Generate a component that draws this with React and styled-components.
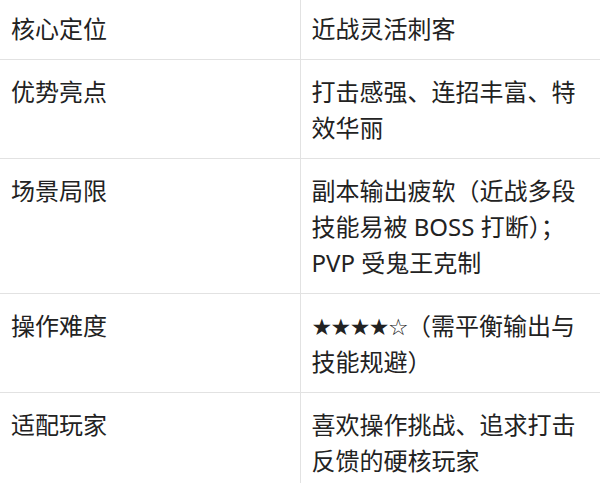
import React from "react";
import styled, { createGlobalStyle } from "styled-components";

const GlobalStyle = createGlobalStyle`
  body {
    margin: 0;
    background: #ffffff;
    font-family: "Noto Sans", "Noto Sans CJK SC", sans-serif;
    color: #222222;
  }
`;

const TableWrap = styled.div`
  width: 600px;
  margin-top: -3px;
  overflow: hidden;
`;

const Table = styled.table`
  width: 600px;
  border-collapse: collapse;
  table-layout: fixed;
  font-size: 24px;
  line-height: 36px;
`;

const Row = styled.tr`
  border-bottom: 1px solid #e2e2e2;
`;

const Cell = styled.td`
  width: 50%;
  padding: 14px 11px 12px;
  vertical-align: top;
  text-align: left;
  border-right: ${(p) => (p.$first ? "1px solid #e2e2e2" : "none")};
`;

const Stars = styled.span`
  font-family: "DejaVu Sans", sans-serif;
  font-size: 23px;
  line-height: 24px;
  letter-spacing: -1.5px;
`;

const rows = [
  { label: "核心定位", value: "近战灵活刺客" },
  { label: "优势亮点", value: "打击感强、连招丰富、特效华丽" },
  {
    label: "场景局限",
    value: "副本输出疲软（近战多段技能易被 BOSS 打断）；PVP 受鬼王克制",
  },
  {
    label: "操作难度",
    value: (
      <>
        <Stars>★★★★☆</Stars>（需平衡输出与技能规避）
      </>
    ),
  },
  { label: "适配玩家", value: "喜欢操作挑战、追求打击反馈的硬核玩家" },
];

const App = () => {
  return (
    <>
      <GlobalStyle />
      <TableWrap>
        <Table>
          <tbody>
            {rows.map((row) => (
              <Row key={row.label}>
                <Cell $first>{row.label}</Cell>
                <Cell>{row.value}</Cell>
              </Row>
            ))}
          </tbody>
        </Table>
      </TableWrap>
    </>
  );
};

export default App;
